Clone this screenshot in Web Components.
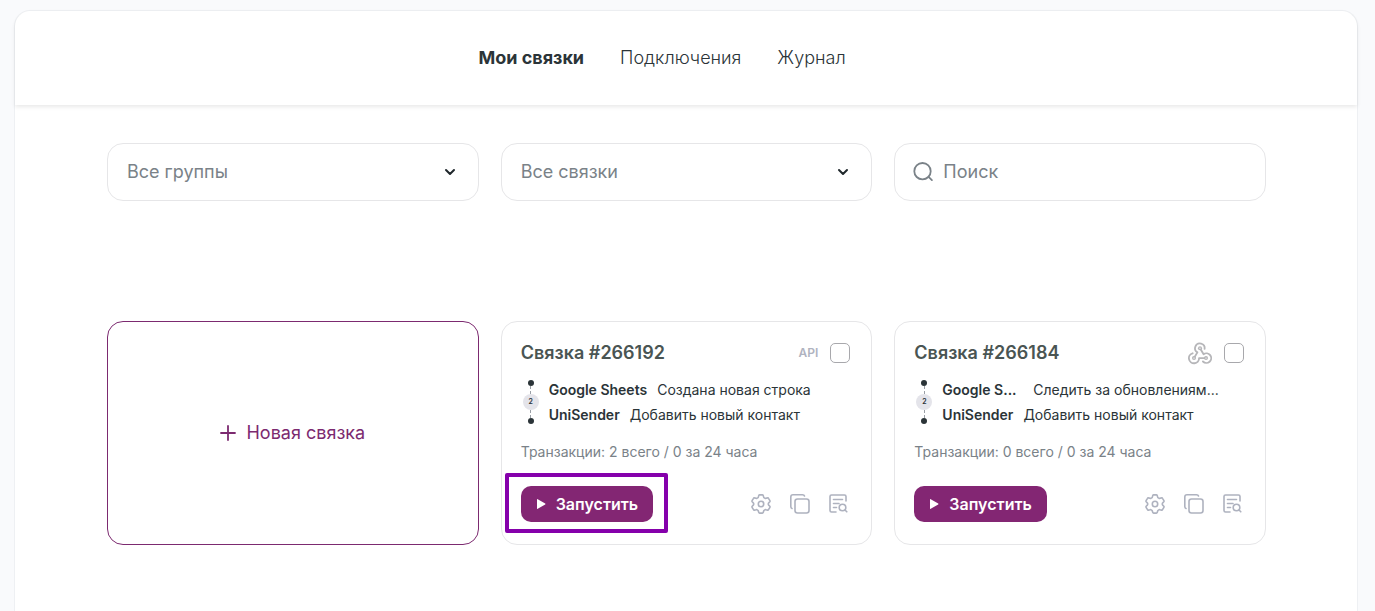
<!DOCTYPE html>
<html lang="ru">
<head>
<meta charset="utf-8">
<meta name="viewport" content="width=device-width, initial-scale=1">
<title>Мои связки</title>
<style>
  body {
    margin: 0;
    min-height: 100vh;
    display: flex;
    background: #f9fafc;
    color: #2b3438;
    font-family: Inter, "Liberation Sans", sans-serif;
    font-size: 18px;
    line-height: 24px;
  }
</style>
</head>
<body>
<app-panel>
  <app-nav slot="header">
    <nav-link active>Мои связки</nav-link>
    <nav-link>Подключения</nav-link>
    <nav-link>Журнал</nav-link>
  </app-nav>
  <card-grid>
    <filter-select label="Группы">Все группы</filter-select>
    <filter-select label="Связки">Все связки</filter-select>
    <search-field label="Поиск"></search-field>
  </card-grid>
  <card-grid>
    <new-bundle>Новая связка</new-bundle>
    <bundle-card kind="api" highlighted>
      <span slot="title">Связка #266192</span>
      <bundle-step slot="steps"><span slot="app">Google Sheets</span>Создана новая строка</bundle-step>
      <bundle-step slot="steps"><span slot="app">UniSender</span>Добавить новый контакт</bundle-step>
      <span slot="stats">Транзакции: 2 всего / 0 за 24 часа</span>
    </bundle-card>
    <bundle-card kind="webhook">
      <span slot="title">Связка #266184</span>
      <bundle-step slot="steps" clipped><span slot="app">Google S...</span>Следить за обновлениям...</bundle-step>
      <bundle-step slot="steps"><span slot="app">UniSender</span>Добавить новый контакт</bundle-step>
      <span slot="stats">Транзакции: 0 всего / 0 за 24 часа</span>
    </bundle-card>
  </card-grid>
</app-panel>

<script>
const define = (name, render) => customElements.define(name, class extends HTMLElement {
  constructor() {
    super();
    this.attachShadow({ mode: 'open' });
  }
  connectedCallback() {
    this.shadowRoot.innerHTML = '<style>*{box-sizing:border-box}</style>' + render(this);
  }
});

define('app-panel', () => `
  <style>
    :host { flex: 1; display: block; margin: 10px 17px 0 14px; background: #fff;
      border: 1px solid #eef0f3; border-bottom: 0; border-radius: 16px 16px 0 0; }
    header { border-radius: 16px 16px 0 0; box-shadow: 0 2px 4px rgba(0,0,0,.09); }
    main { display: grid; gap: 120px; padding: 38px 91px 64px 92px; }
  </style>
  <header><slot name="header"></slot></header>
  <main><slot></slot></main>`);

define('app-nav', () => `
  <style>
    :host { display: block; }
    nav { display: flex; justify-content: center; gap: 36px; padding: 35px 48px 35px 0; }
  </style>
  <nav><slot></slot></nav>`);

define('nav-link', () => `
  <style>
    :host { display: block; }
    a { color: inherit; text-decoration: none; font-weight: 350; }
    :host([active]) a { font-weight: 700; }
  </style>
  <a href="#"><slot></slot></a>`);

define('card-grid', () => `
  <style>
    :host { display: grid; grid-template-columns: repeat(auto-fit, minmax(300px, 1fr)); gap: 22px; }
  </style>
  <slot></slot>`);

define('filter-select', el => `
  <style>
    :host { display: block; }
    label { display: grid; align-items: center; }
    select, svg { grid-area: 1 / 1; }
    select { appearance: none; width: 100%; height: 58px; padding: 0 48px 0 19px; margin: 0;
      border: 1px solid #e6e6e8; border-radius: 16px; background: #fff; color: #7a8288; font: inherit; }
    svg { justify-self: end; margin-right: 22px; pointer-events: none; }
  </style>
  <label>
    <select aria-label="${el.getAttribute('label')}"><option>${el.textContent}</option></select>
    <svg width="14" height="14" viewBox="0 0 14 14" fill="none" stroke="#20282c" stroke-width="2" stroke-linecap="round" stroke-linejoin="round"><path d="M3 5l4 4 4-4"/></svg>
  </label>`);

define('search-field', el => `
  <style>
    :host { display: block; }
    label { display: flex; align-items: center; gap: 8px; height: 58px; padding: 0 18px;
      border: 1px solid #e6e6e8; border-radius: 16px; background: #fff; color: #7a8288; }
    input { flex: 1; min-width: 0; padding: 0; border: 0; outline: 0; background: none; color: inherit; font: inherit; }
    input::placeholder { color: #7a8288; opacity: 1; }
  </style>
  <label>
    <svg width="22" height="22" viewBox="0 0 22 22" fill="none" stroke="currentColor" stroke-width="1.8" stroke-linecap="round"><circle cx="9.5" cy="10.2" r="8.2"/><path d="M15.600 15.900l3.300 3.200"/></svg>
    <input type="search" placeholder="${el.getAttribute('label')}" aria-label="${el.getAttribute('label')}">
  </label>`);

define('new-bundle', () => `
  <style>
    :host { display: grid; }
    button { display: flex; align-items: center; justify-content: center; gap: 10px; min-height: 224px; margin: 0; padding: 0;
      border: 1px solid #7c2a70; border-radius: 16px; background: #fff; color: #7c2a70; font: inherit; cursor: pointer; }
  </style>
  <button type="button">
    <svg width="16" height="16" viewBox="0 0 16 16" fill="none" stroke="currentColor" stroke-width="1.8" stroke-linecap="round"><path d="M8 1v14M1 8h14"/></svg>
    <span><slot></slot></span>
  </button>`);

define('bundle-step', () => `
  <style>
    :host { display: flex; gap: 10px; font-size: 14px; line-height: 25px; white-space: nowrap; }
    b { font-weight: 600; }
    :host([clipped]) b { min-width: 81px; }
  </style>
  <b><slot name="app"></slot></b><span><slot></slot></span>`);

const kindBadge = {
  api: '<span class="api">API</span>',
  webhook: `<svg width="24" height="24" viewBox="0 0 26 24" fill="none" stroke-linecap="round" stroke-linejoin="round" role="img" aria-label="Webhook">
    <g stroke="#b6b6b9" stroke-width="2">
      <path d="M6.500 17.500L10.200 11.300A5.200 5.200 0 1 1 18 7.500"/>
      <path d="M13 6.800l3.900 6.500A5.200 5.200 0 1 1 16.200 21.200"/>
      <path d="M19.500 17.500H12A5.500 5.500 0 1 1 5 12.300"/>
    </g>
    <g fill="#b6b6b9"><circle cx="13" cy="6.800" r="2.200"/><circle cx="6.500" cy="17.500" r="2.200"/><circle cx="19.500" cy="17.500" r="2.200"/></g>
    <g fill="#fff"><circle cx="13" cy="6.800" r=".7"/><circle cx="6.500" cy="17.500" r=".7"/><circle cx="19.500" cy="17.500" r=".7"/></g></svg>`
};

define('bundle-card', el => `
  <style>
    :host { display: block; padding: 19px 21px 22px 19px; border: 1px solid #e6e6e8; border-radius: 16px; background: #fff; }
    .head, .foot, .tools, .flow { display: flex; align-items: center; }
    .head { gap: 12px; }
    h2 { flex: 1; margin: 0; color: #4a5553; font-size: 18px; font-weight: 600; line-height: 24px; }
    .api { color: #b0b3bf; font-size: 12px; font-weight: 600; }
    input { appearance: none; width: 20px; height: 20px; margin: 0; border: 1px solid #a8a8ac; border-radius: 5px; background: #fff; }
    .flow { gap: 8px; margin-top: 12px; }
    .rail { display: flex; flex-direction: column; align-items: center; width: 20px; }
    .dot { width: 6px; height: 6px; border-radius: 50%; background: #2b3438; }
    .dash { height: 8px; border-left: 1px dashed #9a9fa6; }
    .count { width: 16px; height: 16px; border-radius: 50%; background: #e4e4ea; font-size: 7px; font-weight: 600; line-height: 16px; text-align: center; }
    .stats { margin-top: 15px; color: #7a8288; font-size: 14px; line-height: 20px; }
    .foot { justify-content: space-between; margin-top: 24px; }
    .run-wrap { position: relative; }
    :host([highlighted]) .run-wrap::after { content: ""; position: absolute; inset: -13px -15px -11px -16px; border: 4px solid #8500ab; border-radius: 2px; pointer-events: none; }
    .run { display: flex; align-items: center; gap: 10px; height: 36px; margin: 0; padding: 0 15px; border: 0; border-radius: 10px; background: #832673; color: #fff; font: 600 16px/24px Inter, "Liberation Sans", sans-serif; cursor: pointer; }
    .tools { gap: 17px; }
    .tools button { display: block; margin: 0; padding: 0; border: 0; background: none; color: #aeb2bf; cursor: pointer; }
    svg { display: block; }
  </style>
  <div class="head">
    <h2><slot name="title"></slot></h2>
    ${kindBadge[el.getAttribute('kind')]}
    <input type="checkbox" aria-label="Выбрать связку">
  </div>
  <div class="flow">
    <div class="rail"><i class="dot"></i><i class="dash"></i><span class="count">2</span><i class="dash"></i><i class="dot"></i></div>
    <div><slot name="steps"></slot></div>
  </div>
  <div class="stats"><slot name="stats"></slot></div>
  <div class="foot">
    <div class="run-wrap">
      <button class="run" type="button"><svg width="10" height="12" viewBox="0 0 10 12" fill="currentColor"><path d="M1 1.600v8.800q0 .8.7.4l7.500-4.200q.6-.6 0-1.200L1.700 1.200Q1 .8 1 1.600z"/></svg>Запустить</button>
    </div>
    <div class="tools">
      <button type="button" aria-label="Настройки"><svg width="22" height="22" viewBox="0 0 22 22" fill="none" stroke="currentColor" stroke-width="1.600" stroke-linejoin="round"><circle cx="11" cy="11" r="2.700"/><path d="M9.600 1.900h2.800q.6 0 .8.600l.5 1.600q.2.500.7.800l.6.300q.5.300 1 .1l1.600-.4q.6-.2.900.4l1.400 2.400q.3.500-.1 1l-1.100 1.200q-.4.400-.4.900v.4q0 .5.400.9l1.100 1.200q.4.500.1 1l-1.400 2.400q-.3.600-.9.400l-1.600-.4q-.5-.2-1 .1l-.6.300q-.5.300-.7.800l-.5 1.600q-.2.600-.8.600H9.600q-.6 0-.8-.6l-.5-1.600q-.2-.5-.7-.8l-.6-.3q-.5-.3-1-.1l-1.600.4q-.6.2-.9-.4l-1.400-2.400q-.3-.5.100-1l1.100-1.200q.4-.4.400-.9v-.4q0-.5-.4-.9L2.200 8.700q-.4-.5-.1-1l1.400-2.400q.3-.6.900-.4l1.600.4q.5.200 1-.1l.6-.3q.5-.3.700-.8l.5-1.600q.2-.6.800-.6z"/></svg></button>
      <button type="button" aria-label="Копировать"><svg width="22" height="22" viewBox="0 0 22 22" fill="none" stroke="currentColor" stroke-width="1.600" stroke-linecap="round" stroke-linejoin="round"><rect x="6" y="6" width="14" height="14" rx="2.500"/><path d="M3 15.500q-1.200-.3-1.200-2V4q0-2.200 2.200-2.200h9.500q1.700 0 2 1.200"/></svg></button>
      <button type="button" aria-label="Журнал"><svg width="22" height="22" viewBox="0 0 22 22" fill="none" stroke="currentColor" stroke-width="1.600" stroke-linecap="round" stroke-linejoin="round"><path d="M8 19H3.500Q2 19 2 17.500v-14Q2 2 3.500 2h13Q18 2 18 3.500V8M5.500 6.500h9M5.500 10.500h5.500M5.500 14.500h3"/><circle cx="14.500" cy="14.500" r="3.300"/><path d="M17 17l1.800 1.800"/></svg></button>
    </div>
  </div>`);
</script>
</body>
</html>
